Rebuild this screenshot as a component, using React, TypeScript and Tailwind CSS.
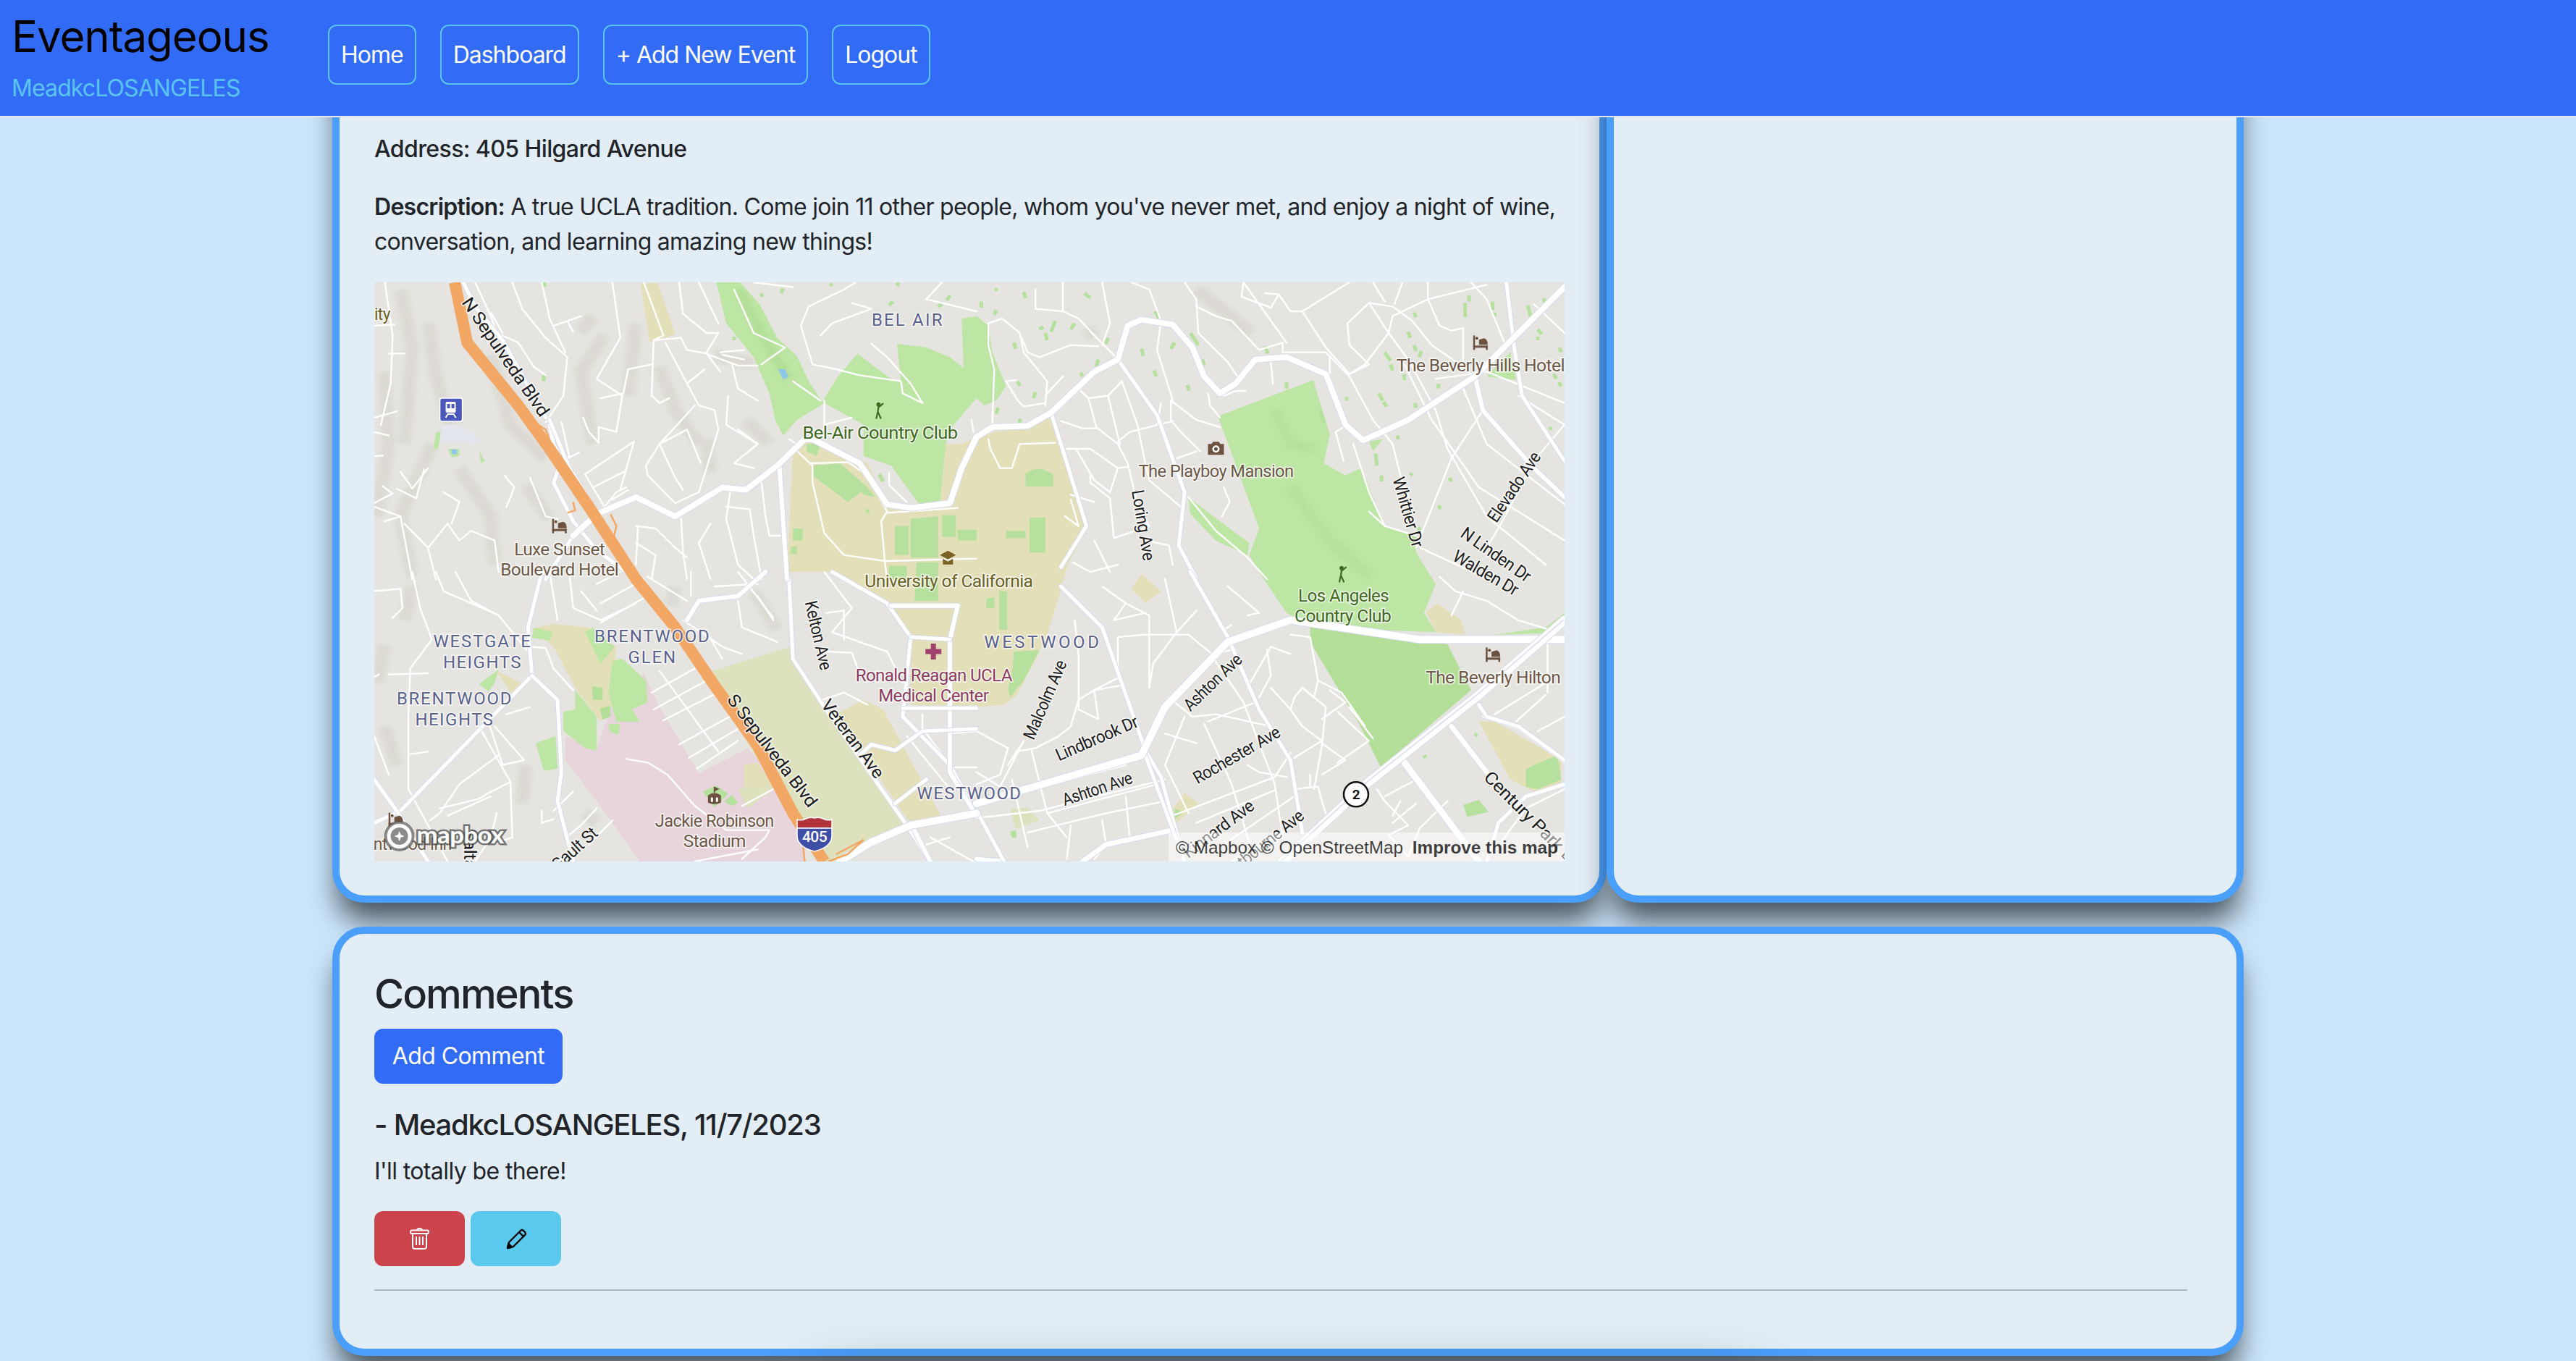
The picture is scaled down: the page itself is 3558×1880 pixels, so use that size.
import React from "react";

type Frame = "a" | "b" | "c" | "d";
const off: Record<Frame, [number, number]> = { a: [0, 0], b: [1568, 0], c: [0, 1230], d: [1568, 1230] };
const shift = (f: Frame, s: string) =>
  s.trim().split(/\s+/).map((p) => {
    const [x, y] = p.split(",").map(Number);
    return `${x + off[f][0]},${y + off[f][1]}`;
  }).join(" ");
const G = (x: number, y: number): [number, number] => [x / 1.845 - 18, y / 3 - 10];

const hill: Record<string, string[]> = {
  a: ["100,60 130,300 110,700", "170,200 190,420 230,640", "330,330 380,620 470,760", "590,170 560,240", "620,250 560,400 590,700", "760,380 800,560 860,700", "900,330 1000,370", "250,800 330,1000 340,1200", "60,400 70,700 40,1000", "180,700 100,1000 130,1250", "420,870 480,1010", "700,200 680,500", "880,680 890,820", "980,600 1040,700"],
  b: ["560,60 640,160 700,240", "280,220 300,260", "20,400 40,480"],
  c: ["130,60 110,200", "60,640 90,800", "60,300 40,460", "420,800 410,960", "570,1000 600,1040", "1000,80 1060,240", "800,60 790,140", "640,820 640,860"],
  d: [],
};

const fills: { f: Frame; c: string; p: string }[] = [
  { f: "a", c: "#bde5a3", p: "905,30 965,30 1015,120 1060,260 1110,335 1140,440 1175,525 1215,420 1265,325 1300,370 1350,430 1375,440 1365,285 1440,300 1500,340 1535,385 1530,180 1568,170 1598,210 1608,320 1643,460 1618,520 1588,540 1568,510 1500,640 1490,700 1475,945 1420,945 1350,790 1280,750 1280,620 1180,530 1150,560 1110,600 1075,665 1055,600 1040,490 1000,340 930,200" },
  { f: "a", c: "#e3dfb9", p: "1100,720 1130,680 1240,740 1290,780 1340,950 1420,955 1475,955 1490,700 1530,700 1568,670 1640,640 1755,590 1775,700 1853,1040 1800,1200 1780,1320 1750,1480 1720,1590 1670,1740 1640,1780 1568,1790 1400,1790 1400,1480 1340,1370 1200,1230 1085,1230" },
  { f: "a", c: "#e3dfb9", p: "712,35 755,32 800,245 735,280 725,180" },
  { f: "c", c: "#dde1bd", p: "895,410 1095,310 1105,380 1170,545 1390,1050 1230,1200 1185,1200 1100,1000 960,650" },
  { f: "c", c: "#e8d5db", p: "520,680 600,730 640,550 720,420 760,560 860,835 985,730 1070,890 1130,1060 1130,1200 710,1200 600,950 520,780" },
  { f: "c", c: "#e3dfb9", p: "435,235 490,215 580,230 650,310 640,550 610,620 545,480 490,310" },
  { f: "c", c: "#e3dfb9", p: "1210,590 1280,530 1330,570 1480,1020 1400,1045" },
  { f: "c", c: "#e3dfb9", p: "345,410 415,465 380,500" },
  { f: "c", c: "#e3dfb9", p: "975,800 1010,790 1050,890 975,960" },
  { f: "c", c: "#dde1bd", p: "960,900 1040,880 1050,900 985,980" },
  { f: "d", c: "#e3dfb9", p: "1145,165 1175,130 1235,200 1245,260 1170,250" },
  { f: "d", c: "#e3dfb9", p: "395,70 420,10 470,80 430,130" },
  { f: "d", c: "#e3dfb9", p: "495,1000 530,915 565,960 510,1040" },
  { f: "d", c: "#e3dfb9", p: "1280,620 1320,620 1490,780 1490,880 1420,910 1360,860" },
  { f: "d", c: "#dde1bd", p: "85,985 130,975 160,1030 100,1065" },
  { f: "b", c: "#bde5a3", p: "615,585 858,435 900,660 885,780 940,830 980,800 1040,1040 1120,1080 1120,1150 1170,1280 1140,1400 1170,1480 860,1460 790,1400 720,1230 695,1160 720,1050" },
  { f: "d", c: "#b3df99", p: "850,230 1200,300 1260,490 1030,810 975,630 850,290" },
  { f: "b", c: "#bde5a3", p: "540,920 620,1020 695,1110 690,1160 610,1100 545,990" },
  { f: "b", c: "#bde5a3", p: "1000,690 1035,680 1010,730" },
  { f: "d", c: "#bde5a3", p: "1320,260 1450,230 1498,170 1498,210 1440,255" },
  { f: "b", c: "#bde5a3", p: "1300,420 1360,320 1375,435" },
  { f: "a", c: "#b6e09d", p: "1150,790 1220,780 1290,880 1240,940 1150,830" },
  { f: "a", c: "#b6e09d", p: "1400,1010 1470,1000 1470,1170 1400,1170" },
  { f: "a", c: "#b6e09d", p: "1480,995 1515,995 1515,1085 1480,1085" },
  { f: "a", c: "#b6e09d", p: "1520,1055 1568,1055 1568,1100 1520,1100" },
  { f: "a", c: "#b6e09d", p: "1100,1050 1125,1050 1125,1100 1100,1100" },
  { f: "a", c: "#b6e09d", p: "1095,1125 1110,1125 1110,1155 1095,1155" },
  { f: "a", c: "#b6e09d", p: "1360,1040 1395,1040 1395,1160 1360,1160" },
  { f: "a", c: "#b6e09d", p: "1250,840 1290,880 1310,920 1280,910 1255,870" },
  { f: "a", c: "#b6e09d", p: "1135,700 1170,700 1160,750 1135,730" },
  { f: "a", c: "#b6e09d", p: "1345,1205 1390,1205 1390,1260 1345,1260" },
  { f: "a", c: "#b6e09d", p: "1415,1190 1470,1190 1470,1350 1410,1350" },
  { f: "b", c: "#b6e09d", p: "125,820 145,805 170,805 195,825 195,875 125,875" },
  { f: "b", c: "#b6e09d", p: "135,1005 175,1005 175,1150 135,1150" },
  { f: "b", c: "#b6e09d", p: "75,1060 125,1060 125,1090 75,1090" },
  { f: "d", c: "#b6e09d", p: "58,80 78,80 78,240 58,240" },
  { f: "d", c: "#b6e09d", p: "25,110 45,105 45,150 25,150" },
  { f: "d", c: "#b6e09d", p: "95,330 160,325 120,450 85,520 80,480 92,400" },
  { f: "c", c: "#bde5a3", p: "440,232 488,248 480,285 435,272" },
  { f: "c", c: "#bde5a3", p: "570,250 590,230 645,310 610,380" },
  { f: "c", c: "#bde5a3", p: "640,370 665,360 725,450 730,540 690,570 710,622 650,620 630,500" },
  { f: "c", c: "#bde5a3", p: "515,580 545,570 545,490 585,570 600,600 600,740 570,730 515,660" },
  { f: "c", c: "#bde5a3", p: "445,710 495,680 500,815 465,825" },
  { f: "c", c: "#b3df99", p: "588,475 615,480 615,530 590,530" },
  { f: "c", c: "#b3df99", p: "608,565 635,555 635,600 615,612" },
  { f: "c", c: "#bde5a3", p: "630,630 660,630 655,675 635,665" },
  { f: "c", c: "#bde5a3", p: "300,465 350,405 340,460 325,495" },
  { f: "c", c: "#b6e09d", p: "870,910 905,885 935,920 900,975" },
  { f: "c", c: "#b6e09d", p: "925,950 945,925 960,955 945,970" },
  { f: "d", c: "#b6e09d", p: "1400,820 1420,800 1480,760 1490,860 1430,900 1400,890" },
  { f: "d", c: "#b6e09d", p: "1240,965 1280,945 1305,995 1250,1015" },
  { f: "d", c: "#b6e09d", p: "85,1075 100,1070 102,1100 90,1102" },
  { f: "d", c: "#b6e09d", p: "505,985 515,985 525,1000 505,1025" },
  { f: "a", c: "#bde5a3", p: "190,650 205,650 195,720 185,720" },
  { f: "a", c: "#bde5a3", p: "220,720 250,720 250,750 230,755" },
  { f: "a", c: "#bde5a3", p: "300,730 315,770 305,780" },
  { f: "a", c: "#e4e6ee", p: "205,620 250,620 300,680 290,700 250,690 200,690" },
];

const dashes: Record<string, string[]> = {
  a: ["465,415 465,440", "465,30 468,50", "950,255 950,270", "1020,75 1022,90", "1075,55 1070,75", "1200,35 1195,45", "1355,110 1345,125", "1370,30 1365,45", "1480,120 1470,130", "1500,85 1492,105", "1320,825 1330,855", "1290,970 1290,985"],
  b: ["50,55 50,65", "120,70 125,95", "275,75 290,95", "12,110 12,135", "50,145 45,165", "170,215 160,225", "200,190 190,235", "250,200 240,225", "175,240 180,270", "95,280 100,305", "335,260 330,285", "420,305 425,335", "310,350 305,380", "265,405 270,420", "150,485 145,510", "105,440 110,460", "55,550 50,575", "110,595 110,615", "455,150 465,180", "545,240 565,290", "505,280 495,305", "575,350 580,375", "452,395 458,420", "537,455 542,478", "735,295 742,325", "790,445 790,470", "605,450 612,465", "875,560 885,610", "1017,740 1020,790", "1032,830 1032,855", "1072,665 1075,680", "1205,840 1210,855", "1178,955 1182,970", "1110,820 1105,830", "1125,1045 1130,1058", "1255,85 1255,110", "1315,110 1315,145", "1245,115 1245,175", "1320,155 1320,170", "1115,155 1120,175", "1100,235 1105,260", "1115,290 1120,315", "1133,315 1128,340", "1040,320 1055,355", "1055,370 1060,395", "1090,410 1090,435", "1177,450 1177,470", "1025,490 1035,520", "1037,525 1045,545", "1117,530 1120,550", "1405,125 1412,175", "1430,225 1440,245", "1430,255 1430,270", "1485,300 1490,320", "1465,630 1460,640", "943,505 943,520", "1445,95 1450,120", "1470,410 1478,430", "1483,445 1490,460"],
  c: [],
  d: ["1275,670 1270,680", "1140,760 1145,770"],
};

const minor: Record<string, string[]> = {
  a: [
    "60,30 80,250 75,450 50,620", "33,650 70,665", "35,750 55,748", "35,590 90,565", "33,210 85,205", "70,325 110,325",
    "100,815 120,860 130,885 170,800", "33,945 80,905 55,875", "90,885 140,925 160,805", "33,960 100,1000 130,1260", "60,1020 100,1000",
    "110,1030 170,1130 190,1260", "170,1130 220,1030 250,1100 280,1060 340,1100 350,1230", "210,900 250,940 230,1030", "365,830 390,880 370,960", "430,840 470,1000 500,1010",
    "290,30 330,170 345,240 400,280 440,380 470,415", "330,155 360,240", "385,30 410,140 470,260 525,340 515,500 470,610", "460,30 480,180 520,320", "490,210 560,170", "525,190 540,235",
    "565,590 580,650 605,695 605,630 650,650 665,500 600,430 660,260 640,30", "665,500 650,650", "510,610 530,750 510,770", "520,765 555,735",
    "570,825 695,690 660,890", "570,825 590,880 675,810", "590,880 620,960 650,900 675,880", "740,370 680,390 668,490 610,510",
    "810,30 820,160 880,240 910,240 880,320", "720,30 770,250 745,270 740,500 760,530 785,510", "745,270 815,260 830,310 880,325 915,400", "885,330 960,375 1010,375", "915,320 975,310", "920,330 975,350",
    "775,280 860,540 900,560 910,640 880,800 860,900 800,945 730,830 725,790 760,700 850,540", "760,700 800,840 820,890", "760,700 830,640 865,780", "830,450 875,390", "945,370 960,470 1010,520", "935,500 930,620 1010,700 950,780 1000,800", "960,640 1010,700",
    "860,30 910,200", "1020,860 1030,1000 1040,1080 1075,1080", "940,900 930,1010 960,1200 1000,1260", "815,1010 820,1150 830,1260", "890,1030 860,1110 890,1260", "930,960 990,970 1000,1080 1020,1260", "700,1040 750,1050 800,1130 830,1170", "705,1040 700,1200", "700,1110 750,1160 740,1260", "640,930 680,890",
    "1145,780 1240,775 1290,830 1340,980 1325,1020 1335,1200 1340,1260", "1105,720 1150,790 1150,860 1180,1070 1230,1160 1335,1185 1568,1175", "1340,985 1520,965", "1555,600 1560,650",
    "1300,285 1340,340 1400,450 1430,530 1380,490 1375,440 1270,415 1210,390 1150,370 1120,210", "1120,210 1140,130 1230,60 1260,30", "1250,115 1300,140 1200,200 1170,250", "1170,520 1100,440", "1180,520 1180,640 1130,680", "1180,620 1250,590", "1345,820 1345,870 1390,940", "1000,30 1100,50", "1480,30 1440,100 1568,150",
    "1020,370 1080,300 1000,240 950,60", "1090,680 1110,700",
  ],
  b: [
    "150,60 150,140 220,150 260,180 300,250 355,340", "220,30 220,150", "30,200 65,180 110,240 120,320 180,440 175,540", "115,260 130,320 160,340 240,290 310,295", "30,200 30,290 45,390 40,620",
    "100,435 75,440 105,520 120,545 175,530", "180,490 220,420", "265,480 285,510 335,500 370,440", "285,510 305,630 360,700 385,780 410,950 440,1040", "335,500 350,600 365,700", "370,440 410,620 430,780 440,850 520,960", "360,690 390,650 500,605",
    "215,605 270,635 305,635", "230,720 290,720 360,800 385,795", "255,725 300,850 340,900 360,800", "290,820 290,860 340,925 350,1090 440,1040", "240,910 300,940", "245,1190 290,1230 360,1200", "300,1100 340,1230",
    "495,520 495,600 520,650 570,730", "510,760 560,730", "470,530 460,620", "495,520 560,600 620,630", "430,1100 490,1120 500,1200", "590,490 595,540 620,590", "630,500 660,480 685,480",
    "560,130 610,170 650,190 720,310 780,280 780,320 890,320 950,420 1010,600 1060,700 1080,830 1110,960", "530,30 560,100 565,240 640,360 665,420", "680,30 675,90 750,135 770,80 735,75", "770,80 800,150 830,150 880,100 950,30",
    "830,150 890,300 950,410 990,370 1050,240 1060,170 1150,100 1300,40", "950,410 1000,370 950,290 945,200 1000,115 1060,130 1110,190 1160,290 1240,380 1240,220 1210,230 1180,210 1150,100", "900,340 900,410",
    "1000,115 1050,240 1100,350 1170,560 1200,720 1300,1000 1450,1200", "1090,370 1160,600 1280,880 1400,1000 1498,1100", "1170,430 1300,400 1498,530", "1240,470 1300,700 1498,950", "750,360 755,450", "960,700 1000,900 1040,1040 1120,1080", "935,630 915,650 935,770", "1290,560 1210,760 1120,1130", "1498,620 1420,770 1340,1020 1300,1130", "1130,1130 1290,1250", "395,30 440,60 470,190 460,310 500,520", "1010,30 1040,110", "1085,30 1065,120", "320,30 340,200 320,290", "680,30 790,280", "1150,30 1150,100", "1260,30 1300,100 1350,300", "1380,500 1498,620", "1420,120 1498,240",
    "30,680 35,720 60,800 90,800 110,700 200,695", "225,1000 260,1040 240,930", "1000,980 1040,1040", "630,880 645,940 625,1000", "540,920 610,1060 690,1170 740,1260",
  ],
  c: [
    "30,80 100,70 105,150 80,190", "130,0 150,150 180,280 125,400 120,600 120,900 220,1200", "190,0 210,80 350,180 425,330", "240,0 280,120 350,180", "70,425 170,420", "33,435 45,425", "125,755 170,745", "33,680 70,840",
    "320,600 360,800 415,780 340,640", "350,760 250,880 200,1000 175,1030", "200,980 300,940 320,920 380,870 385,1100 330,1130", "380,870 300,640", "345,1000 330,1100 290,1200", "220,1010 330,930", "460,990 460,1040 490,1025", "370,590 430,560", "540,910 490,990", "600,980 560,1050 530,1090", "640,1030 580,1130",
    "610,130 720,30", "610,210 740,90", "600,50 660,0", "740,500 850,400", "745,570 880,450", "770,615 920,490", "810,715 950,590", "835,770 960,650", "855,815 960,700", "760,410 910,745",
    "530,0 540,150 610,200 700,130", "480,0 500,200", "560,80 600,160", "820,200 920,310 970,340", "880,250 920,360", "840,0 840,100", "960,120 970,230 1060,290", "960,0 1050,190", "1010,100 1050,200", "730,20 830,120", "900,60 1010,50",
    "675,775 730,790 780,840 850,970 930,1070 1040,1070 1030,1100 970,1190", "850,1200 1010,1150", "970,970 1050,900", "430,310 470,315 490,400 540,490", "1180,0 1250,150 1200,250 1340,330 1380,460", "1185,170 1230,160 1230,280", "1180,330 1250,335 1270,420", "1175,530 1230,500 1290,550",
    "1430,590 1430,650", "1500,670 1568,660", "1440,670 1500,800", "1390,680 1500,900", "1500,810 1568,810", "1500,1100 1440,1130", "1450,1100 1560,1200",
  ],
  d: [
    "0,660 80,730 60,840 0,880", "100,745 150,730 210,680 240,640 260,530 300,490 370,470", "250,200 260,350 260,570 310,610 300,490", "300,490 360,440 360,270 430,260 540,260 600,340 660,320", "320,60 380,130 440,180 440,480", "380,130 350,200 430,170", "480,30 510,250", "560,160 510,250 450,380 440,480", "640,60 720,170 690,180", "650,220 630,240",
    "0,830 60,890 120,700 80,800", "90,860 130,1140", "140,740 180,1000 230,1100", "60,940 240,860 380,800", "180,1000 460,880", "0,1020 160,990 480,860", "130,1080 330,1000 480,950", "240,1050 230,1190", "320,1030 330,1130", "380,930 390,1100",
    "480,670 560,710", "490,520 550,600 610,590 750,640 690,480 750,310 800,340", "580,630 650,880 700,1150", "590,620 710,540", "530,600 480,800", "600,350 680,540 760,880 780,1100", "740,320 750,430 720,520", "750,480 800,570 830,640 880,700 810,770", "830,480 890,560 880,720 860,900", "880,710 940,780 880,840", "800,570 810,520 830,480 860,520", "870,450 860,520", "900,490 940,540 880,610", "920,580 1000,700 920,790", "800,260 850,270 870,450 930,500 990,640", "950,560 1010,690",
    "500,1010 760,850 800,750", "560,1040 760,905", "620,1140 810,930", "690,800 720,830 790,850", "810,900 870,890 880,950 890,1000", "850,840 850,890", "1020,900 1040,950 1100,1050 1050,1090 1100,1180", "1040,930 1110,870", "1080,950 1060,1010", "1120,960 1060,1040",
    "1180,20 1220,80 1300,120 1380,200 1460,240", "1240,80 1210,180", "1320,590 1450,460", "1375,620 1450,510", "1430,660 1498,600", "1455,300 1455,500", "1290,600 1380,650 1498,790", "1498,900 1400,980 1300,1200", "1200,950 1130,1060 1100,1180", "650,1200 800,1060", "480,800 540,1000", "300,1190 330,1130 500,1060",
  ],
};

const medium: { f: Frame; w: number; p: string }[] = [
  { f: "c", w: 5, p: "460,0 425,230 435,430 100,990 33,1040" },
  { f: "c", w: 5, p: "435,430 500,530 510,830 500,950 540,1200" },
  { f: "c", w: 5, p: "33,860 90,990 170,1200" },
  { f: "c", w: 5, p: "1090,30 1100,360 1180,560 1390,1050 1450,1200" },
  { f: "c", w: 6, p: "1030,0 960,100 860,120 830,200" },
  { f: "a", w: 6, p: "1065,780 1085,1260" },
  { f: "c", w: 5, p: "1200,0 1340,130 1400,270 1380,600 1500,800 1560,980" },
  { f: "c", w: 6, p: "1350,140 1520,140 1500,280 1500,830 1560,990" },
  { f: "c", w: 5, p: "1400,270 1500,280" },
  { f: "c", w: 5, p: "1380,565 1568,565" },
  { f: "c", w: 5, p: "1270,760 1300,715 1360,740 1430,660 1568,650" },
  { f: "c", w: 5, p: "1360,960 1440,860" },
  { f: "b", w: 5, p: "360,350 460,580 530,900 515,1120 560,1260" },
  { f: "d", w: 5, p: "545,0 640,270 720,570 800,780 830,1080" },
  { f: "b", w: 5, p: "190,570 215,700 280,1040 215,1210" },
  { f: "d", w: 5, p: "215,60 320,230 400,600 430,740 470,850 530,1200" },
  { f: "b", w: 6, p: "1270,420 1290,560 1420,800 1498,920" },
  { f: "b", w: 5, p: "1350,30 1370,300 1390,500 1498,770" },
  { f: "a", w: 5, p: "480,620 490,700 510,770 490,860 540,1020 600,1140 700,1260" },
  { f: "a", w: 5, p: "470,1260 540,1080" },
  { f: "a", w: 5, p: "260,30 290,130 360,270 470,590" },
  { f: "a", w: 5, p: "480,600 530,800 600,980" },
  { f: "d", w: 5, p: "1280,550 1300,600 1380,640 1498,780" },
  { f: "d", w: 7, p: "1210,640 1300,830" },
  { f: "d", w: 9, p: "1090,790 1280,1200" },
  { f: "d", w: 5, p: "1498,880 1400,930 1330,1040 1300,1200" },
  { f: "d", w: 6, p: "0,1190 70,1200" },
  { f: "d", w: 7, p: "270,1200 330,1130 500,1070" },
  { f: "d", w: 5, p: "0,990 70,1200" },
  { f: "d", w: 5, p: "430,760 530,1200" },
  { f: "c", w: 6, p: "1400,1040 1450,1200" },
];

const major: { f: Frame; w: number; p: string }[] = [
  { f: "a", w: 8, p: "540,1080 600,990 700,920 800,1000 920,880 980,890 1060,790 1130,680 1150,680 1270,780 1340,950 1400,965 1500,945 1530,800 1568,670 1608,630 1698,625 1758,570 1868,400 1928,350 1953,210 1988,185 2068,205 2118,300 2148,420 2188,490 2228,450 2278,350 2358,340 2458,410 2508,620 2553,685 2668,600 2838,420 3066,50" },
  { f: "d", w: 10, p: "0,960 420,760 480,560 640,290 800,200 1130,280 1498,280" },
  { f: "c", w: 10, p: "1568,1000 1400,1050 1300,1120 1220,1200" },
  { f: "d", w: 12, p: "780,1200 1000,870 1280,510 1498,200" },
];

const road = (p: string, w: number, k: string) => (
  <g key={k}>
    <polyline points={p} fill="none" stroke="#d7dbec" strokeWidth={w + 2} strokeLinejoin="round" strokeLinecap="round" vectorEffect="non-scaling-stroke" />
    <polyline points={p} fill="none" stroke="#ffffff" strokeWidth={w} strokeLinejoin="round" strokeLinecap="round" vectorEffect="non-scaling-stroke" />
  </g>
);

type Lb = { t: string; x: number; y: number; w?: number; c: string; r?: number; a?: "start" | "middle" | "end"; s?: number; sp?: boolean; o?: number };
const PLACE = "#6d5848", GREEN = "#41691f", AREA = "#5a628c", ST = "#1d1d1d", OLIVE = "#6a6124", MED = "#8b3c5f";
const labels: Lb[] = [
  { t: "ity", x: 33, y: 185, c: OLIVE, a: "start", w: 22 },
  { t: "BEL AIR", x: 1390, y: 210, w: 97, c: AREA, sp: true },
  { t: "N Sepulveda Blvd", x: 355, y: 352, w: 193, c: ST, r: 55.6 },
  { t: "Bel-Air Country Club", x: 1322, y: 678, w: 214, c: GREEN },
  { t: "Luxe Sunset", x: 505, y: 1162, w: 125, c: PLACE },
  { t: "Boulevard Hotel", x: 505, y: 1245, w: 163, c: PLACE },
  { t: "University of California", x: 1497, y: 1292, w: 232, c: OLIVE },
  { t: "The Playboy Mansion", x: 2178, y: 838, w: 214, c: PLACE },
  { t: "The Beverly Hills Hotel", x: 2852, y: 398, w: 232, c: PLACE },
  { t: "Loring Ave", x: 1978, y: 1040, w: 98, c: ST, r: 80.6 },
  { t: "Whittier Dr", x: 2653, y: 988, w: 99, c: ST, r: 74 },
  { t: "Elevado Ave", x: 2950, y: 892, w: 111, c: ST, r: -56 },
  { t: "N Linden Dr", x: 2883, y: 1178, w: 112, c: ST, r: 35 },
  { t: "Walden Dr", x: 2858, y: 1255, w: 100, c: ST, r: 30 },
  { t: "Los Angeles", x: 2503, y: 1352, w: 125, c: GREEN },
  { t: "Country Club", x: 2501, y: 1437, w: 133, c: GREEN },
  { t: "WESTWOOD", x: 1733, y: 1545, w: 158, c: AREA, sp: true },
  { t: "Ronald Reagan UCLA", x: 1459, y: 1682, w: 216, c: MED },
  { t: "Medical Center", x: 1458, y: 1767, w: 152, c: MED },
  { t: "Malcolm Ave", x: 1756, y: 1770, w: 116, c: ST, r: -66.7 },
  { t: "Ashton Ave", x: 2180, y: 1705, w: 101, c: ST, r: -44 },
  { t: "Lindbrook Dr", x: 1880, y: 1942, w: 121, c: ST, r: -23.6 },
  { t: "Ashton Ave", x: 1880, y: 2152, w: 100, c: ST, r: -18.6 },
  { t: "Rochester Ave", x: 2238, y: 2010, w: 134, c: ST, r: -30 },
  { t: "Kinnard Ave", x: 2193, y: 2315, w: 116, c: ST, r: -37 },
  { t: "Westbourne Ave", x: 2405, y: 2250, w: 150, c: ST, r: -39, a: "end" },
  { t: "Century Park E", x: 2858, y: 2085, w: 165, c: ST, r: 45, a: "start" },
  { t: "The Beverly Hilton", x: 2884, y: 1692, w: 186, c: PLACE },
  { t: "WESTGATE", x: 307, y: 1543, w: 134, c: AREA, sp: true },
  { t: "HEIGHTS", x: 307, y: 1630, w: 107, c: AREA, sp: true },
  { t: "BRENTWOOD", x: 236, y: 1778, w: 158, c: AREA, sp: true },
  { t: "HEIGHTS", x: 236, y: 1865, w: 107, c: AREA, sp: true },
  { t: "BRENTWOOD", x: 740, y: 1521, w: 158, c: AREA, sp: true },
  { t: "GLEN", x: 740, y: 1608, w: 65, c: AREA, sp: true },
  { t: "Kelton Ave", x: 1150, y: 1498, w: 97, c: ST, r: 77 },
  { t: "Veteran Ave", x: 1240, y: 1935, w: 128, c: ST, r: 53.6 },
  { t: "S Sepulveda Blvd", x: 1035, y: 1985, w: 188, c: ST, r: 52.8 },
  { t: "Jackie Robinson", x: 900, y: 2285, w: 164, c: PLACE },
  { t: "Stadium", x: 900, y: 2371, w: 86, c: PLACE },
  { t: "WESTWOOD", x: 1548, y: 2173, w: 143, c: AREA, sp: true },
  { t: "ntwood Inn", x: 230, y: 2382, w: 108, c: PLACE, a: "end" },
  { t: "Gault St", x: 605, y: 2320, w: 76, c: ST, r: -42, a: "end" },
  { t: "Saltair", x: 262, y: 2295, w: 70, c: ST, r: 90, a: "start" },
];

function Label({ l }: { l: Lb }) {
  const [x, y] = G(l.x, l.y);
  return (
    <text
      x={x}
      y={y}
      textAnchor={l.a ?? "middle"}
      fill={l.c}
      stroke="rgba(255,255,255,0.75)"
      strokeWidth={3}
      paintOrder="stroke"
      fontFamily="Roboto, sans-serif"
      fontSize={24}
      textLength={l.w}
      lengthAdjust={l.sp ? "spacing" : "spacingAndGlyphs"}
      transform={l.r ? `rotate(${l.r} ${x} ${y})` : undefined}
      opacity={l.o}
    >
      {l.t}
    </text>
  );
}

function Bed({ gx, gy }: { gx: number; gy: number }) {
  const [x, y] = G(gx, gy);
  return (
    <g transform={`translate(${x - 10} ${y - 10})`} fill="#6d5240">
      <rect x="0" y="0" width="2.5" height="20" />
      <rect x="0" y="14" width="20" height="3" />
      <rect x="17.5" y="14" width="2.5" height="6" />
      <circle cx="5" cy="4" r="2" />
      <path d="M8 6 L15 4 Q20 5 20 13 L8 13 Z" />
    </g>
  );
}

function Golf({ gx, gy }: { gx: number; gy: number }) {
  const [x, y] = G(gx, gy);
  return (
    <g transform={`translate(${x} ${y})`} stroke="#41691f" fill="none" strokeWidth="2.2" strokeLinecap="round">
      <circle cx="-1" cy="-8" r="1.8" fill="#41691f" />
      <path d="M-1 -5 L-2 2 L-4 11 M-2 2 L2 11 M-1 -4 L5 -9" />
    </g>
  );
}

function MapArt() {
  const pt = (gx: number, gy: number) => G(gx, gy);
  const [tx, ty] = pt(228, 558);
  const [cx, cy] = pt(2178, 718);
  const [sx, sy] = pt(1495, 1172);
  const [hx, hy] = pt(1458, 1560);
  const [jx, jy] = pt(900, 2162);
  const [ix, iy] = pt(1155, 2310);
  const [tx2, ty2] = pt(2535, 2152);
  const [mx, my] = pt(97, 2325);
  return (
    <svg viewBox="0 0 1644 800" className="block w-full h-full">
      <defs>
        <filter id="blur6"><feGaussianBlur stdDeviation="7" /></filter>
      </defs>
      <rect width="1644" height="800" fill="#e6e4e0" />
      <g transform="translate(-18 -10) scale(0.54201 0.33333)">
        <g filter="url(#blur6)" opacity="0.5">
          {(Object.keys(hill) as Frame[]).flatMap((f) =>
            hill[f].map((p, i) => (
              <polyline key={f + i} points={shift(f, p)} fill="none" stroke="#d2d0c6" strokeWidth="18" vectorEffect="non-scaling-stroke" />
            ))
          )}
        </g>
        {fills.map((a, i) => (
          <polygon key={i} points={shift(a.f, a.p)} fill={a.c} />
        ))}
        <g opacity="0.35" filter="url(#blur6)">
          <polyline points={shift("b", "760,560 800,700 860,720")} fill="none" stroke="#a9d88c" strokeWidth="12" vectorEffect="non-scaling-stroke" />
          <polyline points={shift("b", "800,880 900,1100 1000,1250")} fill="none" stroke="#a9d88c" strokeWidth="14" vectorEffect="non-scaling-stroke" />
          <polyline points={shift("a", "960,60 1040,300 1090,430")} fill="none" stroke="#9ed283" strokeWidth="12" vectorEffect="non-scaling-stroke" />
        </g>
        <polygon points="1062,390 1080,390 1088,420 1076,435" fill="#8fc7ea" />
        <polygon points="228,722 244,722 244,742 232,742" fill="#8fc7ea" />
        {(Object.keys(dashes) as Frame[]).flatMap((f) =>
          dashes[f].map((p, i) => (
            <polyline key={"d" + f + i} points={shift(f, p)} fill="none" stroke="#b6e09d" strokeWidth="5" vectorEffect="non-scaling-stroke" />
          ))
        )}
        <g>
          {(Object.keys(minor) as Frame[]).flatMap((f) =>
            minor[f].map((p, i) => (
              <polyline key={"m" + f + i} points={shift(f, p)} fill="none" stroke="#ffffff" strokeWidth="2.4" strokeLinejoin="round" strokeLinecap="round" vectorEffect="non-scaling-stroke" />
            ))
          )}
        </g>
        {medium.map((m, i) => road(shift(m.f, m.p), m.w, "md" + i))}
        {major.map((m, i) => road(shift(m.f, m.p), m.w, "mj" + i))}
        <polyline points={shift("d", "775,1200 995,870 1275,510 1495,200")} fill="none" stroke="#d7dbec" strokeWidth="1.5" vectorEffect="non-scaling-stroke" />
        <polyline
          points="238,30 270,280 400,540 480,720 580,960 700,1260 800,1460 900,1700 1010,1950 1100,2230 1180,2430"
          fill="none"
          stroke="#f3a765"
          strokeWidth="16"
          strokeLinejoin="round"
          vectorEffect="non-scaling-stroke"
        />
        <polyline points="525,985 545,975 540,940" fill="none" stroke="#f3a765" strokeWidth="2.5" vectorEffect="non-scaling-stroke" />
        <polyline points="635,990 650,1040 640,1110 690,1250" fill="none" stroke="#f3a765" strokeWidth="2.5" vectorEffect="non-scaling-stroke" />
        <polyline points="440,610 470,640 490,730" fill="none" stroke="#f3a765" strokeWidth="2.5" vectorEffect="non-scaling-stroke" />
        <polyline points={shift("c", "1210,1170 1280,1110 1240,1170 1190,1200")} fill="none" stroke="#f3a765" strokeWidth="2.5" vectorEffect="non-scaling-stroke" />
        <polyline points={shift("c", "1125,1120 1130,1200")} fill="none" stroke="#f3a765" strokeWidth="2.5" vectorEffect="non-scaling-stroke" />
      </g>

      {labels.map((l, i) => (
        <Label key={i} l={l} />
      ))}

      <rect x={tx - 15} y={ty - 16} width="31" height="32" rx="3" fill="#4a57bb" stroke="#fff" strokeWidth="1.5" />
      <rect x={tx - 7} y={ty - 11} width="14" height="15" rx="2" fill="#fff" />
      <rect x={tx - 5} y={ty - 8} width="4" height="6" fill="#4a57bb" />
      <rect x={tx + 1} y={ty - 8} width="4" height="6" fill="#4a57bb" />
      <path d={`M${tx - 7} ${ty + 11} l3 -5 h8 l3 5`} stroke="#fff" strokeWidth="2" fill="none" />

      <Bed gx={505} gy={1040} />
      <Bed gx={2852} gy={280} />
      <Bed gx={2884} gy={1573} />
      <Bed gx={88} gy={2258} />
      <Golf gx={1320} gy={560} />
      <Golf gx={2500} gy={1238} />

      <g transform={`translate(${cx} ${cy})`}>
        <path d="M-11 -6 h5 l2 -3 h8 l2 3 h5 v15 h-22 z" fill="#6d5240" />
        <circle cx="0" cy="1" r="5" fill="#fff" />
        <circle cx="0" cy="1" r="2.5" fill="#6d5240" />
      </g>
      <g transform={`translate(${sx} ${sy})`} fill="#7a6224">
        <path d="M-11 -4 L0 -10 L11 -4 L0 2 Z" />
        <path d="M-7 1 L0 5 L7 1 V9 H-7 Z" />
      </g>
      <path d={`M${hx - 3.5} ${hy - 11} h7 v7.5 h7.5 v7 h-7.5 v7.5 h-7 v-7.5 h-7.5 v-7 h7.5 z`} fill="#a0426d" />
      <g transform={`translate(${jx} ${jy})`} fill="#6d5240">
        <path d="M0 -14 L7 -11 L1 -8 V-6 H-1 V-14 Z" />
        <path d="M-9 -2 Q0 -9 9 -2 V8 Q0 12 -9 8 Z" />
        <rect x="-5" y="1" width="3" height="6" fill="#fff" />
        <rect x="2" y="1" width="3" height="6" fill="#fff" />
      </g>
      <g transform={`translate(${ix} ${iy})`}>
        <path d="M-24 -18 Q-18 -16 -12 -19 Q-6 -22 0 -20 Q6 -22 12 -19 Q18 -16 24 -18 V-6 H-24 Z" fill="#b0343a" stroke="#fff" strokeWidth="1.5" />
        <path d="M-24 -6 H24 V4 Q24 20 0 26 Q-24 20 -24 4 Z" fill="#3f4fa8" stroke="#fff" strokeWidth="1.5" />
        <text x="0" y="13" textAnchor="middle" fill="#fff" fontFamily="Roboto, sans-serif" fontWeight="500" fontSize="21">405</text>
      </g>
      <g>
        <ellipse cx={tx2} cy={ty2} rx="17" ry="17" fill="#fff" stroke="#111" strokeWidth="2.5" />
        <text x={tx2} y={ty2 + 7} textAnchor="middle" fill="#111" fontFamily="Roboto, sans-serif" fontWeight="700" fontSize="19">2</text>
      </g>

      <g>
        <circle cx={mx} cy={my} r="19" fill="#fff" stroke="rgba(90,90,90,0.7)" strokeWidth="4" />
        <circle cx={mx} cy={my} r="12" fill="#8b8b8b" />
        <path d={`M${mx} ${my - 7} l2 5 l5 2 l-5 2 l-2 5 l-2 -5 l-5 -2 l5 -2 z`} fill="#fff" />
        <text x={mx + 24} y={my + 10} fill="#fff" stroke="rgba(80,80,80,0.75)" strokeWidth="5" paintOrder="stroke" fontFamily="Lato, sans-serif" fontWeight="700" fontSize="33" textLength={120} lengthAdjust="spacingAndGlyphs">mapbox</text>
      </g>
    </svg>
  );
}

function TrashIcon() {
  return (
    <svg width="27" height="30" viewBox="0 0 27 30" fill="none" stroke="#fff" strokeWidth="2">
      <path d="M10 3.5 Q10 1 13.5 1 Q17 1 17 3.5" />
      <rect x="1" y="3.5" width="25" height="4.5" rx="2" />
      <path d="M4 8 V26 Q4 29 7 29 H20 Q23 29 23 26 V8" />
      <path d="M9 12 V24 M13.5 12 V24 M18 12 V24" />
    </svg>
  );
}

function PencilIcon() {
  return (
    <svg width="28" height="29" viewBox="0 0 28 29" fill="none" stroke="#000" strokeWidth="2.4" strokeLinejoin="round">
      <path d="M2 27 L4 19 L20 3 Q22 1 24 3 L26 5 Q28 7 26 9 L10 25 Z" />
      <path d="M18 5 L24 11" />
      <path d="M2 27 L3.5 21 L8 25.5 Z" fill="#000" />
    </svg>
  );
}

function NavButton({ children }: { children: React.ReactNode }) {
  return (
    <button className="h-[83px] px-[16px] rounded-[12px] border-2 border-[#5bc4ee] bg-transparent text-white text-[32px] leading-[48px] tracking-[-1px] whitespace-nowrap">
      {children}
    </button>
  );
}

const cardClass =
  "relative bg-[#e3edf6] border-[10px] border-[#4a9ffb] rounded-[44px] shadow-[0_32px_40px_-8px_rgba(0,0,0,0.65)]";

export default function App() {
  return (
    <div className="w-full h-[1880px] overflow-hidden bg-[#cbe6fc] text-[#212529] font-['Inter',sans-serif] text-[32px] leading-[48px] tracking-[-0.6px]">
      <nav className="relative z-10 h-[162px] bg-[#326cf6] border-b-2 border-[#e3e6ea] flex items-start">
        <div className="w-[453px] pl-[16px] shrink-0 pt-[14px]">
          <div className="text-black text-[60px] leading-[72px] tracking-[-1.1px]">Eventageous</div>
          <div className="text-[#5bc4ee] text-[32px] leading-[48px] mt-[12px] tracking-[-0.9px]">MeadkcLOSANGELES</div>
        </div>
        <div className="flex gap-[33px] pt-[34px]">
          <NavButton>Home</NavButton>
          <NavButton>Dashboard</NavButton>
          <NavButton>+ Add New Event</NavButton>
          <NavButton>Logout</NavButton>
        </div>
      </nav>
      <main className="h-[1718px] overflow-hidden">
        <div className="w-[2640px] mx-auto -mt-[102px]">
          <div className="grid grid-cols-[1760px_880px]">
            <section className={`${cardClass} p-[48px] pb-[47px]`}>
              <p className="pt-[2px] mb-[14px] font-medium">Date: Wednesday, 11/15/2023</p>
              <p className="mb-[32px] font-medium">Address: 405 Hilgard Avenue</p>
              <p className="mb-[32px] tracking-[-0.72px]">
                <span className="font-semibold">Description:</span> A true UCLA tradition. Come join 11 other people, whom you've never met, and enjoy a night of wine, conversation, and learning amazing new things!
              </p>
              <div className="relative h-[800px] overflow-hidden">
                <MapArt />
                <div className="absolute right-0 bottom-0 w-[547px] h-[40px] bg-white/50 pl-[10px] pt-[3px] text-[24.3px] leading-[36px] text-black/75 font-['Liberation_Sans',sans-serif] tracking-normal whitespace-nowrap">
                  © Mapbox © OpenStreetMap <span className="font-bold ml-[6px]">Improve this map</span>
                </div>
              </div>
            </section>
            <section className={cardClass} />
          </div>
          <section className={`${cardClass} mt-[33px] p-[48px]`}>
            <h3 className="pt-[2px] h-[67px] text-[56px] leading-[67px] font-medium mb-[16px] tracking-[-1.9px]">Comments</h3>
            <button className="block w-[260px] h-[76px] rounded-[12px] bg-[#326cf6] text-white">Add Comment</button>
            <h5 className="mt-[33px] mb-[16px] text-[40px] leading-[48px] font-medium tracking-[-1.25px]">- MeadkcLOSANGELES, 11/7/2023</h5>
            <p className="mb-[31px]">I'll totally be there!</p>
            <div className="flex gap-[8px]">
              <button className="w-[125px] h-[76px] rounded-[12px] bg-[#cb444b] flex items-center justify-center"><TrashIcon /></button>
              <button className="w-[125px] h-[76px] rounded-[12px] bg-[#5bc8ee] flex items-center justify-center"><PencilIcon /></button>
            </div>
            <hr className="mt-[32px] mb-[32px] mr-[20px] h-[2px] border-0 bg-[#adb5bd]" />
          </section>
          <section className="relative mx-auto mt-[33px] w-[1320px] h-[200px] rounded-[44px] bg-[#e3edf6] shadow-[0_0_80px_rgba(0,0,0,0.35)]" />
        </div>
      </main>
    </div>
  );
}
